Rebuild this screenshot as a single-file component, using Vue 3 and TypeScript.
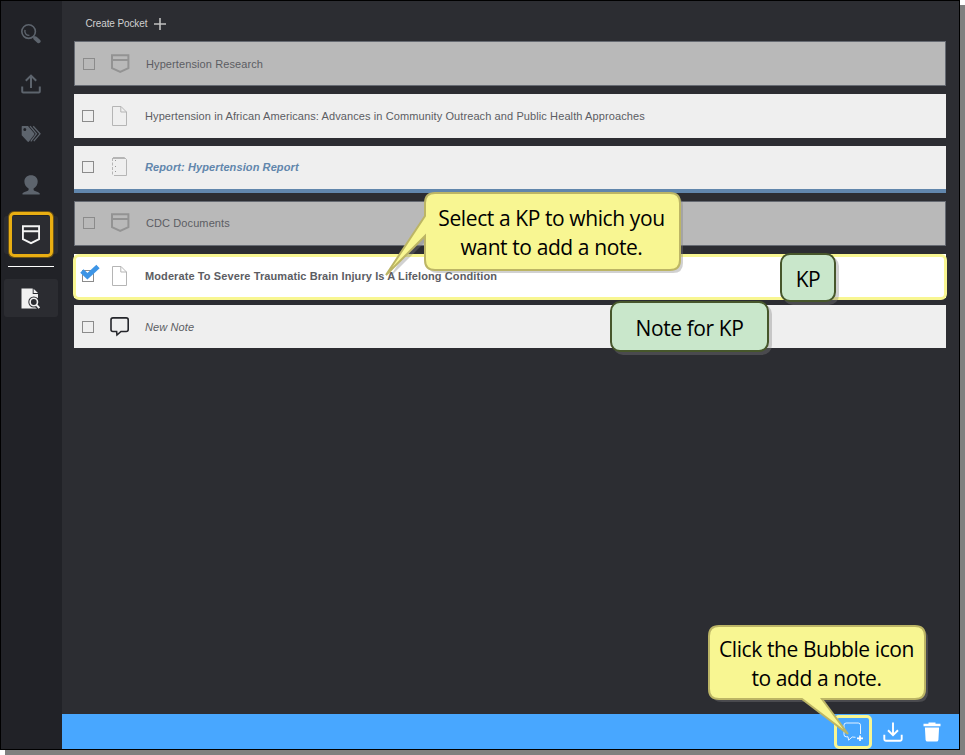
<script setup lang="ts">
type RowKind = 'pocket' | 'file' | 'report' | 'note'

interface Row {
  kind: RowKind
  title: string
  mod: string
  checked?: boolean
}

const rows: Row[] = [
  { kind: 'pocket', title: 'Hypertension Research', mod: 'pocket first' },
  {
    kind: 'file',
    title: 'Hypertension in African Americans: Advances in Community Outreach and Public Health Approaches',
    mod: 'file',
  },
  { kind: 'report', title: 'Report: Hypertension Report', mod: 'report' },
  { kind: 'pocket', title: 'CDC Documents', mod: 'pocket second' },
  {
    kind: 'file',
    title: 'Moderate To Severe Traumatic Brain Injury Is A Lifelong Condition',
    mod: 'selected',
    checked: true,
  },
  { kind: 'note', title: 'New Note', mod: 'note' },
]
</script>

<template>
  <div class="stage">
    <div class="window">
      <nav class="sidebar">
        <button class="nav" aria-label="Search">
          <svg width="20" height="20" viewBox="0 0 20 20" fill="none" stroke="#5d646d">
            <circle cx="7.6" cy="7.6" r="6.8" stroke-width="1.6" />
            <path d="M4 5.8C3.3 9 5 11.4 8.4 11.4" stroke-width="1.4" />
            <path d="M12.4 12.4L14 14" stroke-width="1.6" />
            <path d="M14.3 14.3L17.6 17.2" stroke-width="4" stroke-linecap="round" />
          </svg>
        </button>
        <button class="nav" aria-label="Upload">
          <svg width="20" height="20" viewBox="0 0 20 20" fill="none" stroke="#5d646d" stroke-width="2">
            <path d="M10 14V1.8M4.8 6.8L10 1.6l5.2 5.2" />
            <path d="M1.2 12.5v5.1q0 1 1 1h15.6q1 0 1-1v-5.1" />
          </svg>
        </button>
        <button class="nav" aria-label="Tags">
          <svg width="20" height="18" viewBox="0 0 20 18">
            <path fill="#5d646d" fill-rule="evenodd" d="M1.2 1H7L13.2 8.2Q13.8 9 13.2 9.7L8 16.6Q7.3 17.2 6.5 16.5L.7 10.2V1.6Q.7 1 1.2 1ZM3.8 3a1.5 1.5 0 1 0 0 3a1.5 1.5 0 0 0 0-3Z" />
            <path d="M9 1.2L15.5 8.8L9.8 16.4M12.2 1.2L19 8.8L12.8 16.2" fill="none" stroke="#5d646d" stroke-width="1.3" />
          </svg>
        </button>
        <button class="nav" aria-label="Profile">
          <svg width="20" height="20" viewBox="0 0 20 20" fill="#5d646d">
            <path d="M10 .3C6 .3 3.4 3 3.4 6.7C3.4 9.7 5.2 12 7.6 13.5V15C7.6 16 3 16.8 1.5 18.2V19.5H18.7V18.2C17.3 16.8 12.6 16 12.6 15V13.5C15 12 16.7 9.7 16.7 6.7C16.7 3 14 .3 10 .3Z" />
          </svg>
        </button>
        <button class="nav active" aria-label="Pockets">
          <svg width="18" height="20" viewBox="0 0 18 20" fill="none" stroke="#f4f4f4" stroke-width="1.9">
            <path d="M.9 1.2H17.1V14.2L9 18.2L.9 14.2ZM.9 6.3H17.1" />
          </svg>
          <span class="nav-ring"></span>
        </button>
        <hr class="divider" />
        <button class="nav open" aria-label="Document search">
          <svg width="19" height="21" viewBox="0 0 19 21">
            <path d="M.5.5H11.7V6H17V20.5H.5Z" fill="#f1f1f1" />
            <path d="M12.6.7L17 5.1H12.6Z" fill="#f1f1f1" />
            <circle cx="12.8" cy="14" r="5.5" fill="#2c2d32" />
            <path d="M14 16L18.4 20.5" stroke="#2c2d32" stroke-width="4" />
            <circle cx="12.8" cy="14" r="3.7" fill="none" stroke="#f1f1f1" stroke-width="1.6" />
            <path d="M15.5 16.8L18.3 20" stroke="#f1f1f1" stroke-width="2" />
          </svg>
        </button>
      </nav>

      <section class="main">
        <header class="toolbar">
          <span>Create Pocket</span>
          <svg width="12" height="12" viewBox="0 0 12 12"><path d="M0 6H12M6 0V12" stroke="#c0c0c0" stroke-width="1.6" /></svg>
        </header>

        <ul class="list">
          <li v-for="row in rows" :key="row.title" class="row" :class="row.mod">
            <span class="check">
              <svg v-if="row.checked" class="tick" width="20" height="16" viewBox="0 0 20 16">
                <path d="M1.9 7L7.4 12.2L18 2.4" fill="none" stroke="#3d95e6" stroke-width="4.8" />
              </svg>
            </span>
            <span class="glyph">
              <svg v-if="row.kind === 'pocket'" width="20" height="20" viewBox="0 0 20 20" fill="none" stroke="#939393" stroke-width="2">
                <path d="M1 1.2H17.4V14.2L9.2 17.9L1 14.2ZM1 6H17.4" />
              </svg>
              <svg v-else-if="row.kind === 'file'" width="20" height="20" viewBox="0 0 20 20" fill="none" stroke="#b5b5b5">
                <path d="M2.5.5H11L16.5 6V19.5H2.5ZM10.8.5V6H16.5" />
              </svg>
              <svg v-else-if="row.kind === 'report'" width="20" height="20" viewBox="0 0 20 20" fill="none" stroke="#b5b5b5">
                <path d="M3 .5H14.5L16.5 2.5V18.5H4M3 1.5H15" />
                <path d="M2.5 1V18.5" stroke-dasharray="3 1.5" />
                <path d="M5.5 3v1M5.5 9v1M5.5 14v1" stroke="#999" />
              </svg>
              <svg v-else width="20" height="20" viewBox="0 0 20 20" fill="none" stroke="#25262b" stroke-width="1.6">
                <path d="M3 .9H16.2Q18.2.9 18.2 2.9V12.5Q18.2 14.5 16.2 14.5H11L7 18L6.6 14.5H3Q1 14.5 1 12.5V2.9Q1 .9 3 .9Z" />
              </svg>
            </span>
            <span class="title">{{ row.title }}</span>
          </li>
        </ul>

        <footer class="actions">
          <button class="action bubble" aria-label="Add note">
            <svg width="20" height="20" viewBox="0 0 20 20" fill="none" stroke="#fff">
              <path d="M17.5 12V3.2Q17.5 1 15.3 1H3.2Q1 1 1 3.2V12.5Q1 14.8 3.2 14.8H5L5.6 18.2L9.2 15L12.5 15.3" stroke-opacity=".85" />
              <path d="M17 13.5V19M14 16.3H20" stroke-width="1.7" />
            </svg>
          </button>
          <button class="action" aria-label="Download">
            <svg width="20" height="20" viewBox="0 0 20 20" fill="none" stroke="#fff" stroke-width="1.9">
              <path d="M10 .5V13M5 8.2L10 13.1L15 8.2" />
              <path d="M1.3 12.8V17.3Q1.3 18.7 2.7 18.7H17.3Q18.7 18.7 18.7 17.3V12.8" />
            </svg>
          </button>
          <button class="action" aria-label="Delete">
            <svg width="18" height="20" viewBox="0 0 18 20" fill="#fff">
              <path d="M.5 1.7H5.5V.4H12.5V1.7H17.5V4.3H.5ZM1.9 5.5H16.1L15.4 18Q15.2 19.6 13.6 19.6H4.4Q2.8 19.6 2.6 18Z" />
            </svg>
          </button>
        </footer>
      </section>
    </div>

    <div class="callout select">
      <svg width="304" height="88" viewBox="0 0 304 88">
        <path class="shade" transform="translate(3 3)" d="M50 1H285Q295 1 295 11V68Q295 78 285 78H50Q40 78 40 68V44L1 83L40 24V11Q40 1 50 1Z" />
        <path class="shape" d="M50 1H285Q295 1 295 11V68Q295 78 285 78H50Q40 78 40 68V44L1 83L40 24V11Q40 1 50 1Z" />
      </svg>
      <p>Select a KP to which you<br />want to add a note.</p>
    </div>
    <div class="callout click">
      <svg width="224" height="114" viewBox="0 0 224 114">
        <path class="shade" transform="translate(3 3)" d="M11 1H207Q217 1 217 11V64Q217 74 207 74H11Q1 74 1 64V11Q1 1 11 1Z" />
        <path class="shape" d="M11 1H207Q217 1 217 11V64Q217 74 207 74H114L140 109L94 74H11Q1 74 1 64V11Q1 1 11 1Z" />
      </svg>
      <p>Click the Bubble icon<br />to add a note.</p>
    </div>
    <div class="label kp">KP</div>
    <div class="label note-label">Note for KP</div>
  </div>
</template>

<style>
body {
  margin: 0;
  background: #fff;
}
</style>

<style scoped>
.stage {
  position: relative;
  width: 965px;
  height: 755px;
  overflow: hidden;
  font-family: 'Liberation Sans', Arial, sans-serif;
}
.window {
  box-sizing: border-box;
  display: flex;
  width: 960px;
  height: 750px;
  border: 1px solid #000;
  box-shadow: 5px 5px 0 #808080;
  background: #2c2d32;
}
button {
  padding: 0;
  border: 0;
  background: none;
}
svg {
  display: block;
}
.sidebar {
  display: flex;
  flex: 0 0 61px;
  box-sizing: border-box;
  flex-direction: column;
  align-items: center;
  gap: 12.2px;
  padding: 14px 1px 0 0;
  background: #212227;
}
.nav {
  position: relative;
  display: flex;
  flex: 0 0 38px;
  align-items: center;
  justify-content: center;
  box-sizing: border-box;
  width: 54px;
  padding-right: 1px;
  border-radius: 3px;
}
.nav.active,
.nav.open {
  background: #2b2c31;
}
.nav-ring {
  position: absolute;
  inset: -4px 5px -3px;
  border: 3px solid #e9ae12;
  border-radius: 5px;
  box-shadow: 0 0 0 1px #6b5216;
}
.divider {
  width: 46px;
  height: 1px;
  margin: 0;
  border: 0;
  background: #fff;
}
.main {
  display: flex;
  flex: 1;
  flex-direction: column;
  min-width: 0;
}
.toolbar {
  display: flex;
  box-sizing: border-box;
  flex: 0 0 40px;
  align-items: center;
  gap: 7px;
  padding: 5px 0 0 23.5px;
  color: #d0d0d0;
  font-size: 10px;
  letter-spacing: -0.12px;
}
.list {
  display: flex;
  flex: 1;
  flex-direction: column;
  gap: 8px;
  margin: 0;
  padding: 0 13px 0 12px;
  list-style: none;
}
.row {
  position: relative;
  display: flex;
  box-sizing: border-box;
  flex: 0 0 44px;
  align-items: center;
  padding-left: 8px;
  background: #efefef;
  color: #5c5d63;
  font-size: 11px;
  letter-spacing: 0.1px;
}
.row.pocket {
  flex-basis: 45px;
  border: 1px solid #666a72;
  background: #b9b9b9;
}
.row.second {
  padding-bottom: 1px;
}
.row.report {
  flex-basis: 47px;
  padding-bottom: 1px;
  border-bottom: 4px solid #6186ac;
  color: #6186ac;
  font-style: italic;
  font-weight: bold;
}
.row.selected {
  background: #fff;
  font-weight: bold;
}
.row.selected::after {
  position: absolute;
  inset: 0 -1px -2px;
  border: 3px solid #f8f692;
  border-radius: 6px;
  content: '';
}
.row.note {
  flex-basis: 43px;
  margin-top: -1px;
  font-style: italic;
}
.check {
  position: relative;
  box-sizing: border-box;
  flex: 0 0 12px;
  height: 12px;
  margin-right: 16px;
  border: 1px solid #8b8b8b;
}
.tick {
  position: absolute;
  top: -7px;
  left: -3px;
}
.glyph {
  flex: 0 0 20px;
  margin-right: 15px;
}
.title {
  white-space: nowrap;
}
.actions {
  display: flex;
  flex: 0 0 35px;
  align-items: center;
  justify-content: flex-end;
  gap: 20px;
  padding-right: 18px;
  background: #48a7ff;
}
.action.bubble {
  margin: 0 -9px 0 0;
  padding: 4px 6px 4px 6px;
  border: 3px solid #f8f692;
  border-radius: 5px;
}
.callout {
  position: absolute;
  color: #000;
  font-family: 'Open Sans', 'Noto Sans', sans-serif;
  font-size: 21px;
  letter-spacing: -0.4px;
  line-height: 29px;
  text-align: center;
}
.callout p {
  position: absolute;
  margin: 0;
  white-space: nowrap;
}
.select {
  top: 192px;
  left: 384.5px;
}
.select p {
  top: 12px;
  right: 8px;
  left: 38px;
}
.click {
  top: 625px;
  left: 708px;
}
.click p {
  top: 10px;
  right: 7px;
  left: 0;
}
.shape {
  fill: #f8f692;
  stroke: #bcb565;
  stroke-width: 2;
}
.shade {
  fill: #808080;
  fill-opacity: 0.36;
}
.label {
  position: absolute;
  display: flex;
  box-sizing: border-box;
  align-items: center;
  justify-content: center;
  padding-top: 2px;
  border: 2px solid #46562b;
  border-radius: 10px;
  background: #c9e7cb;
  box-shadow: 3px 3px 0 rgba(128, 128, 128, 0.36);
  color: #000;
  font-family: 'Open Sans', 'Noto Sans', sans-serif;
  font-size: 21px;
  letter-spacing: -0.4px;
}
.kp {
  top: 253px;
  left: 780px;
  width: 56px;
  height: 49px;
}
.note-label {
  top: 301px;
  left: 610px;
  width: 159px;
  height: 51px;
}
</style>
